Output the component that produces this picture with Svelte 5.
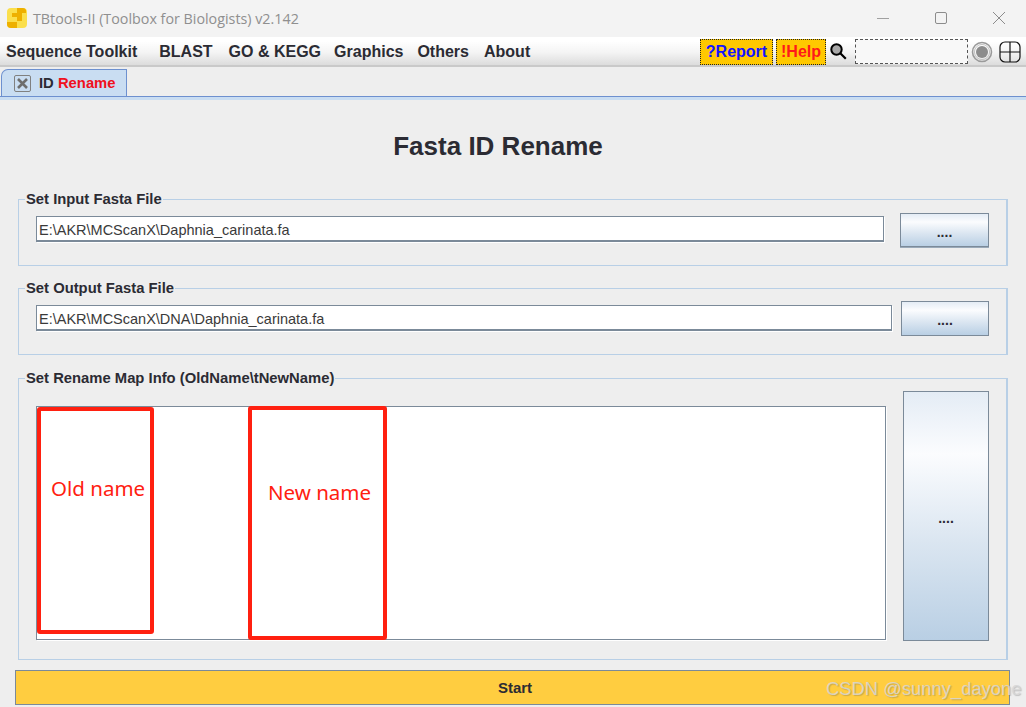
<script>
  const menus = ['BLAST', 'GO & KEGG', 'Graphics', 'Others', 'About'];
</script>

<div class="window">
  <header class="titlebar">
    <svg class="logo" width="20" height="20" viewBox="0 0 20 20">
      <rect x="0" y="0" width="20" height="20" rx="4" fill="#fbdf4c"/>
      <path d="M10 0h6a4 4 0 0 1 3 2v3h-4v8h-5v-4h-5v-4h5z" fill="#eeb000"/>
      <path d="M0 14h10v6h-6a4 4 0 0 1-4-4z" fill="#eeb000"/>
    </svg>
    <span class="apptitle">TBtools-II (Toolbox for Biologists) v2.142</span>
    <div class="winctl">
      <svg width="14" height="14" viewBox="0 0 14 14"><path d="M1 7.5h12" stroke="#a0a0a0" stroke-width="1" fill="none"/></svg>
      <svg width="14" height="14" viewBox="0 0 14 14"><rect x="1.5" y="1.5" width="11" height="11" rx="1.5" stroke="#8c8c8c" fill="none"/></svg>
      <svg width="14" height="14" viewBox="0 0 14 14"><path d="M1 1l12 12M13 1L1 13" stroke="#8c8c8c" stroke-width="1" fill="none"/></svg>
    </div>
  </header>

  <nav class="menubar">
    <span class="menu first">Sequence Toolkit</span>
    {#each menus as m}
      <span class="menu">{m}</span>
    {/each}
    <div class="tools">
      <span class="pill report">?Report</span>
      <span class="pill help">!Help</span>
      <svg class="lens" width="17" height="17" viewBox="0 0 17 17">
        <circle cx="6.5" cy="6.5" r="5.2" fill="#a8a8a8" stroke="#000" stroke-width="2"/>
        <path d="M10.3 10.3L15.8 15.8" stroke="#000" stroke-width="2.2"/>
      </svg>
      <div class="search"></div>
      <svg class="radio" width="22" height="22" viewBox="0 0 22 22">
        <circle cx="11" cy="11" r="9.5" fill="none" stroke="#9a9a9a" stroke-width="1.6"/>
        <circle cx="11" cy="11" r="7.6" fill="none" stroke="#c4c4c4" stroke-width="1"/>
        <circle cx="11" cy="11" r="6" fill="#8c8c8c"/>
      </svg>
      <svg class="grid" width="22" height="22" viewBox="0 0 22 22">
        <rect x="1" y="1" width="20" height="20" rx="5" fill="none" stroke="#111" stroke-width="1.2"/>
        <path d="M11 1v20M1 11h20" stroke="#111" stroke-width="1.2"/>
      </svg>
    </div>
  </nav>

  <div class="tabbar">
    <div class="tab">
      <span class="close">
        <svg width="11" height="11" viewBox="0 0 11 11"><path d="M1 1l9 9M10 1L1 10" stroke="#6e6e6e" stroke-width="2.6"/></svg>
      </span>
      <span class="tabtext">ID <em>Rename</em></span>
    </div>
  </div>

  <main class="content">
    <h1>Fasta ID Rename</h1>

    <fieldset class="group one">
      <legend>Set Input Fasta File</legend>
      <div class="row">
        <div class="field w1">E:\AKR\MCScanX\Daphnia_carinata.fa</div>
        <button class="browse b1">....</button>
      </div>
    </fieldset>

    <fieldset class="group two">
      <legend>Set Output Fasta File</legend>
      <div class="row">
        <div class="field w2">E:\AKR\MCScanX\DNA\Daphnia_carinata.fa</div>
        <button class="browse b2">....</button>
      </div>
    </fieldset>

    <fieldset class="group three">
      <legend>Set Rename Map Info (OldName\tNewName)</legend>
      <div class="row">
        <div class="area"></div>
        <button class="browse b3">....</button>
      </div>
    </fieldset>

    <button class="start">Start</button>
  </main>

  <div class="mark box-old"></div>
  <div class="mark box-new"></div>
  <span class="note note-old">Old name</span>
  <span class="note note-new">New name</span>
  <span class="watermark">CSDN @sunny_dayone</span>
</div>

<style>
  :global(body) { margin: 0; background: #eeeeee; }
  .window {
    position: relative;
    width: 1026px;
    height: 707px;
    overflow: hidden;
    font-family: "Liberation Sans", Arial, sans-serif;
    color: #2b2b33;
    background: #eeeeee;
  }
  .titlebar {
    height: 37px;
    box-sizing: border-box;
    display: flex;
    align-items: center;
    padding-left: 7px;
    background: #f3f3f3;
  }
  .logo { flex: none; margin-top: -1px; }
  .apptitle {
    margin-left: 6px;
    margin-top: -1px;
    font: 14.3px "Open Sans", sans-serif;
    color: #8f8f8f;
  }
  .winctl {
    margin-left: auto;
    display: flex;
    gap: 44px;
    padding-right: 20px;
    margin-top: -1px;
  }
  .menubar {
    height: 30px;
    box-sizing: border-box;
    display: flex;
    align-items: center;
    padding: 1px 0 0 6px;
    background: linear-gradient(#ffffff 15%, #f4f4f4 55%, #dcdcdc 100%);
    border-bottom: 2px solid #c9c9c9;
    font-weight: 700;
    font-size: 16px;
  }
  .menu { margin-right: 15px; white-space: nowrap; }
  .menu.first { margin-right: 22px; }
  .menu:nth-child(2) { margin-right: 16px; }
  .menu:nth-child(3) { margin-right: 13px; }
  .menu:nth-child(4) { margin-right: 14px; }
  .tools {
    margin-left: auto;
    display: flex;
    align-items: center;
    padding-right: 5px;
  }
  .pill {
    box-sizing: border-box;
    height: 26px;
    display: flex;
    align-items: center;
    justify-content: center;
    background: #ffc800;
    border: 1px dotted #222;
  }
  .report { width: 73px; color: #1414ff; }
  .help { width: 50px; margin-left: 3px; color: #ff1a1a; }
  .lens { margin-left: 4px; }
  .search {
    box-sizing: border-box;
    width: 113px;
    height: 25px;
    margin-left: 8px;
    border: 1px dashed #555;
    background: #f8f8f8;
  }
  .radio { margin-left: 3px; }
  .grid { margin-left: 6px; }
  .tabbar {
    height: 30px;
    box-sizing: border-box;
    padding: 3px 0 0 1px;
    display: flex;
    align-items: flex-end;
    border-bottom: 1px solid #6d90cf;
  }
  .tab {
    box-sizing: border-box;
    width: 126px;
    height: 27px;
    display: flex;
    align-items: center;
    padding-left: 12px;
    gap: 8px;
    background: #c9ddf2;
    border: 1px solid #6d90cf;
    border-bottom: none;
    border-radius: 7px 0 0 0;
    font-size: 14.8px;
    font-weight: 700;
  }
  .tabtext em { font-style: normal; color: #f01020; }
  .close {
    box-sizing: border-box;
    width: 17px;
    height: 17px;
    border: 1px solid #808080;
    border-radius: 2px;
    display: flex;
    align-items: center;
    justify-content: center;
  }
  .content {
    box-sizing: border-box;
    height: 610px;
    padding: 0 16px 0 15px;
    border-top: 3px solid #c9ddf2;
    display: flex;
    flex-direction: column;
    align-items: flex-start;
  }
  h1 {
    box-sizing: border-box;
    width: 100%;
    margin: 31px 0 0;
    padding-right: 29px;
    text-align: center;
    font-size: 26px;
    line-height: 30px;
    font-weight: 700;
  }
  .group {
    box-sizing: border-box;
    width: 990px;
    margin: 0 0 0 3px;
    padding: 0 17px;
    min-width: 0;
    border: 0;
    border-top: 1px solid #b8cfe6;
    border-left: 1px solid #b8cfe6;
    border-bottom: 1px solid #b8cfe6;
    border-right: 2px solid #b8cfe6;
  }
  legend {
    margin-left: -11px;
    padding: 0 1px;
    font-size: 14.8px;
    line-height: 16px;
    font-weight: 700;
  }
  .group.one { margin-top: 30px; height: 75px; }
  .group.two { margin-top: 14px; height: 75px; }
  .group.three { margin-top: 15px; height: 290px; }
  .row { display: flex; align-items: flex-start; }
  .one .row { padding-top: 6px; }
  .two .row, .three .row { padding-top: 5px; }
  .field, .area {
    box-sizing: border-box;
    background: #fff;
    border: 1px solid #7b8a99;
    box-shadow: 1px 1px 0 #ffffff;
  }
  .field {
    height: 26px;
    border-bottom-width: 2px;
    font-size: 14.5px;
    line-height: 26px;
    padding-left: 2px;
    color: #3a3a3a;
  }
  .w1 { width: 848px; margin-top: 3px; }
  .b1 { width: 89px; height: 34px; margin-left: 16px; box-shadow: 0 1px 0 #9aa9b8; }
  .w2 { width: 856px; margin-top: 4px; }
  .b2 { width: 88px; height: 35px; margin-left: 9px; }
  .area { width: 850px; height: 234px; margin-top: 15px; }
  .b3 { width: 86px; height: 250px; margin-left: 17px; }
  .browse {
    box-sizing: border-box;
    flex: none;
    padding: 3px 0 0;
    border: 1px solid #7b8a99;
    background: linear-gradient(#e4ecf5 0%, #fbfcfe 25%, #dbe6f1 60%, #b9cfe4 100%);
    color: #2b2b33;
    font: 700 14px "Liberation Sans", Arial, sans-serif;
  }
  .start {
    box-sizing: border-box;
    width: 995px;
    height: 35px;
    margin-top: 10px;
    padding: 0 0 0 5px;
    background: #ffcd40;
    border: 1px solid #7b8a99;
    font: 700 15px "Liberation Sans", Arial, sans-serif;
    color: #2b2b33;
  }
  .mark {
    position: absolute;
    box-sizing: border-box;
    border: 4px solid #ff2010;
    border-radius: 3px;
  }
  .box-old { left: 37px; top: 407px; width: 117px; height: 227px; }
  .box-new { left: 248px; top: 406px; width: 139px; height: 234px; }
  .note {
    position: absolute;
    font: 20.5px "Noto Sans", sans-serif;
    line-height: 28px;
    color: #ff2010;
  }
  .note-old { left: 51px; top: 474px; }
  .note-new { left: 268px; top: 478px; }
  .watermark {
    position: absolute;
    left: 826px;
    top: 678px;
    font: 18.4px "Liberation Sans", Arial, sans-serif;
    color: rgba(215, 215, 215, 0.85);
    text-shadow: 1px 1px 1px rgba(90, 90, 90, 0.3);
    white-space: nowrap;
  }
</style>
